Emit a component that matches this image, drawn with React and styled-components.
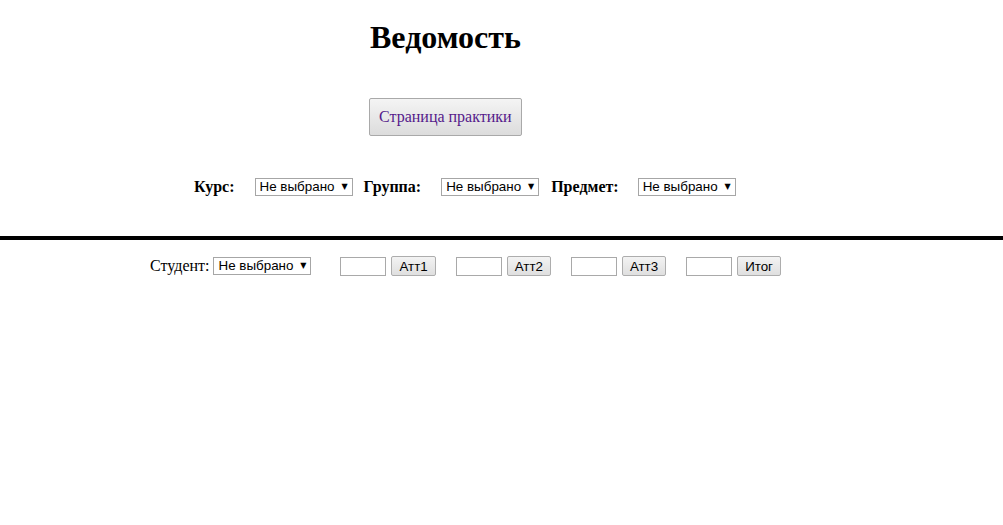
import React from "react";
import styled, { createGlobalStyle } from "styled-components";

const Global = createGlobalStyle`
  html, body { margin: 0; padding: 0; background: #fff; }
  body { font-family: "Liberation Serif", "Times New Roman", serif; font-size: 16px; color: #000; }
`;

const Page = styled.div`
  display: flex;
  flex-direction: column;
`;

const Header = styled.header`
  display: flex;
  flex-direction: column;
  align-items: flex-start;
  padding-left: 369px;
`;

const Title = styled.h1`
  margin: 19px 0 0 1px;
  font-size: 32px;
  line-height: 37px;
  font-weight: bold;
`;

const NavButton = styled.button`
  margin-top: 42px;
  height: 38px;
  padding: 0 9px;
  font-family: "Liberation Serif", "Times New Roman", serif;
  font-size: 16px;
  color: #551a8b;
  background: linear-gradient(#f4f4f4, #dcdcdc);
  border: 1px solid #a9a9a9;
  border-radius: 2px;
  cursor: pointer;
`;

const FilterRow = styled.div`
  display: flex;
  align-items: center;
  height: 18px;
  margin-top: 42px;
  padding-left: 194px;
`;

const FilterLabel = styled.label`
  font-weight: bold;
  font-size: 16px;
  margin-right: ${(p) => p.$gap}px;
  white-space: nowrap;
`;

const SelectWrap = styled.span`
  position: relative;
  display: inline-flex;
  margin-right: ${(p) => p.$after || 0}px;
`;

const Select = styled.select`
  appearance: none;
  -webkit-appearance: none;
  width: 98px;
  height: 18px;
  padding: 0 0 0 4px;
  margin: 0;
  font-family: "Liberation Sans", Arial, sans-serif;
  font-size: 13.4px;
  line-height: 16px;
  color: #000;
  background: #fff;
  border: 1px solid #a6a6a6;
  border-radius: 0;
  outline: none;
`;

const Arrow = styled.span`
  position: absolute;
  right: 5px;
  top: 3px;
  font-size: 8px;
  line-height: 12px;
  color: #000;
  pointer-events: none;
  font-family: "DejaVu Sans", sans-serif;
`;

const Divider = styled.hr`
  margin: 40px 0 0 0;
  border: none;
  height: 4px;
  background: #000;
`;

const StudentRow = styled.div`
  display: flex;
  align-items: center;
  height: 20px;
  margin-top: 16px;
  padding-left: 150px;
`;

const StudentLabel = styled.label`
  font-size: 16px;
  margin-right: 4px;
`;

const Group = styled.span`
  display: inline-flex;
  align-items: center;
  gap: 5px;
  margin-left: ${(p) => p.$left}px;
`;

const Score = styled.input`
  width: 46px;
  height: 19px;
  box-sizing: border-box;
  margin: 0;
  padding: 0 2px;
  border: 1px solid #a9a9a9;
  font-family: "Liberation Sans", Arial, sans-serif;
  font-size: 13.33px;
`;

const SmallButton = styled.button`
  height: 20px;
  box-sizing: border-box;
  padding: 0 7px;
  margin: 0;
  font-family: "Liberation Sans", Arial, sans-serif;
  font-size: 13.33px;
  color: #000;
  background: linear-gradient(#f3f3f3, #dfdfdf);
  border: 1px solid #adadad;
  border-radius: 2px;
`;

function Dropdown({ after }) {
  return (
    <SelectWrap $after={after}>
      <Select defaultValue="none">
        <option value="none">Не выбрано</option>
      </Select>
      <Arrow>▼</Arrow>
    </SelectWrap>
  );
}

const scores = [
  { label: "Атт1", left: 29 },
  { label: "Атт2", left: 20 },
  { label: "Атт3", left: 20 },
  { label: "Итог", left: 20 },
];

export default function App() {
  return (
    <>
      <Global />
      <Page>
        <Header>
          <Title>Ведомость</Title>
          <NavButton>Страница практики</NavButton>
        </Header>
        <FilterRow>
          <FilterLabel $gap={20}>Курс:</FilterLabel>
          <Dropdown after={11} />
          <FilterLabel $gap={20}>Группа:</FilterLabel>
          <Dropdown after={12} />
          <FilterLabel $gap={19}>Предмет:</FilterLabel>
          <Dropdown />
        </FilterRow>
        <Divider />
        <StudentRow>
          <StudentLabel>Студент:</StudentLabel>
          <Dropdown />
          {scores.map((s) => (
            <Group key={s.label} $left={s.left}>
              <Score type="text" />
              <SmallButton>{s.label}</SmallButton>
            </Group>
          ))}
        </StudentRow>
      </Page>
    </>
  );
}
